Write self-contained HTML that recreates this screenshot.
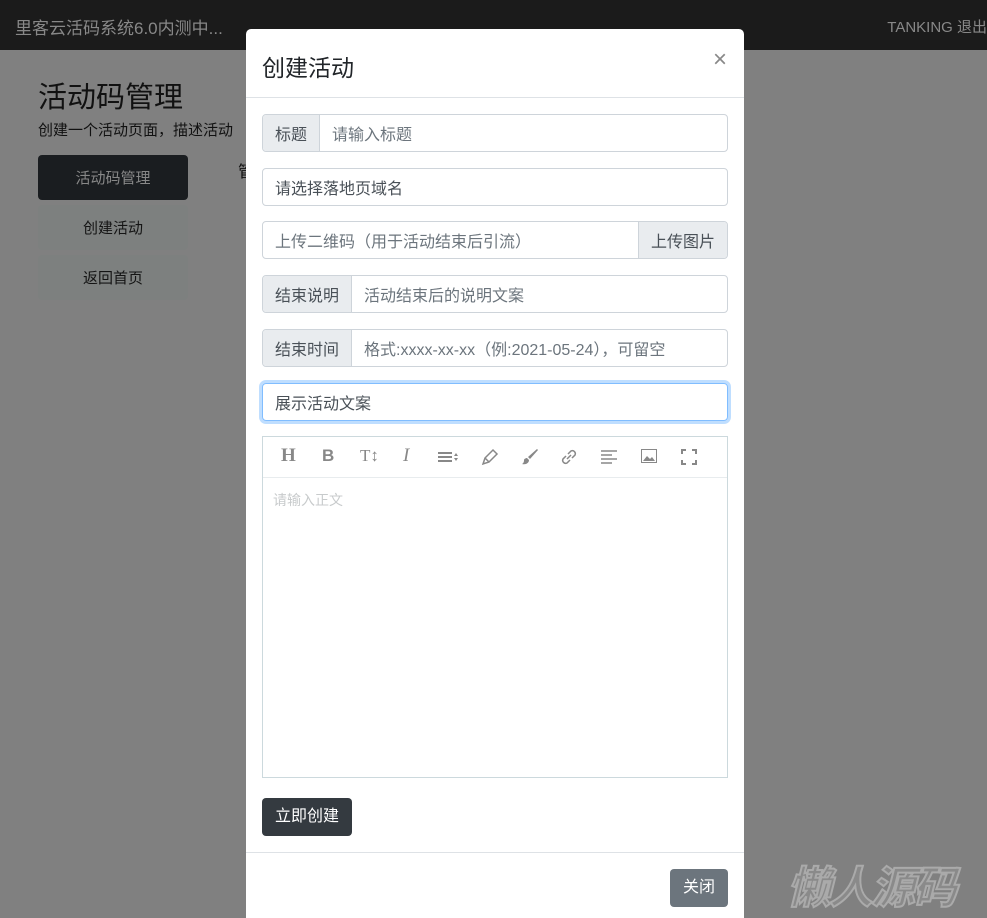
<!DOCTYPE html>
<html><head><meta charset="utf-8"><style>
*{box-sizing:border-box;margin:0;padding:0}
html{width:987px;height:918px;overflow:hidden}
body{width:987px;height:918px;overflow:hidden;background:#808080;font-family:"Liberation Sans","Noto Sans CJK SC",sans-serif;position:relative;color:#212529}
.nav{position:absolute;left:0;top:0;width:987px;height:50px;background:#1b1b1b;color:#8b8b8b;font-size:17px}
.nav .b{position:absolute;left:15px;top:14px;color:#888}
.nav .r{position:absolute;right:0;top:16px;font-size:15px;color:#888}
.h1{position:absolute;left:38px;top:74px;font-size:29px;color:#111}
.sub{position:absolute;left:38px;top:119px;font-size:15px;color:#111;white-space:nowrap}
.mi{position:absolute;left:38px;width:150px;height:45px;border-radius:4px;text-align:center;line-height:47px;font-size:15px;color:#141414;background:#7d807f}
.mi.a{background:#1a1d20;color:#888}
.x{position:absolute;left:238px;top:158px;font-size:16px;color:#111}
.modal{position:absolute;left:246px;top:29px;width:498px;height:889px;background:#fff;border-radius:5px 5px 0 0}
.mh{height:69px;border-bottom:1px solid #dee2e6;position:relative}
.mh .t{position:absolute;left:16px;top:20px;font-size:23px;color:#212529}
.mh .c{position:absolute;right:17px;top:17px;font-size:24px;color:#888}
.f{position:absolute;left:16px;width:466px;height:38px;border:1px solid #ced4da;border-radius:4px;font-size:16px;display:flex;align-items:center;overflow:hidden}
.f .p{background:#e9ecef;height:100%;padding:0 12px;display:flex;align-items:center;border-right:1px solid #ced4da;color:#495057}
.f .ph{padding-left:12px;color:#6c757d}
.f .s{margin-left:auto;background:#e9ecef;height:100%;padding:0 12px;display:flex;align-items:center;border-left:1px solid #ced4da;color:#495057}
.ed{position:absolute;left:16px;top:407px;width:466px;height:342px;border:1px solid #ccd9dd}
.tb{height:41px;border-bottom:1px solid #e8ecee;position:relative;color:#888;font-size:17px}
.tb span{position:absolute;top:9px}
.btn{position:absolute;border-radius:4px;color:#fff;font-size:16px;text-align:center}
</style></head><body>
<div class="nav"><span class="b">里客云活码系统6.0内测中...</span><span class="r">TANKING 退出</span></div>
<div class="h1">活动码管理</div>
<div class="sub">创建一个活动页面，描述活动</div>
<div class="mi a" style="top:155px">活动码管理</div>
<div class="mi" style="top:205px">创建活动</div>
<div class="mi" style="top:255px">返回首页</div>
<div class="x">管</div>
<div class="modal">
<div class="mh"><span class="t">创建活动</span><span class="c">×</span></div>
<div class="f" style="top:85px"><span class="p">标题</span><span class="ph">请输入标题</span></div>
<div class="f" style="top:139px"><span class="ph" style="color:#495057">请选择落地页域名</span></div>
<div class="f" style="top:192px"><span class="ph">上传二维码（用于活动结束后引流）</span><span class="s">上传图片</span></div>
<div class="f" style="top:246px"><span class="p">结束说明</span><span class="ph">活动结束后的说明文案</span></div>
<div class="f" style="top:300px"><span class="p">结束时间</span><span class="ph">格式:xxxx-xx-xx（例:2021-05-24），可留空</span></div>
<div class="f" style="top:354px;border-color:#80bdff;box-shadow:0 0 0 3px rgba(0,123,255,.25)"><span class="ph" style="color:#495057">展示活动文案</span></div>
<div class="ed"><div class="tb">
<span style="left:18px;font-family:'Liberation Serif',serif;font-weight:bold;font-size:19px;top:8px">H</span>
<span style="left:59px;font-weight:bold">B</span>
<span style="left:97px;font-family:'Liberation Serif',serif">T↕</span>
<span style="left:140px;font-family:'Liberation Serif',serif;font-style:italic;font-size:19px;top:8px">I</span>
<svg style="position:absolute;left:175px;top:14px" width="22" height="12"><rect x="0" y="1" width="14" height="2" fill="#888"/><rect x="0" y="5" width="14" height="2" fill="#888"/><rect x="0" y="9" width="14" height="2" fill="#888"/><path d="M16 5l2-3 2 3zM16 7l2 3 2-3z" fill="#888"/></svg>
<svg style="position:absolute;left:218px;top:11px" width="18" height="18"><path d="M2 16l2-6 8-8 4 4-8 8zM4 10l4 4" stroke="#888" stroke-width="1.5" fill="none"/></svg>
<svg style="position:absolute;left:258px;top:11px" width="18" height="18"><path d="M16 1l1 1-8 9-2-2z" fill="#888"/><path d="M6 10l2 2c0 3-3 5-7 4 2-1 2-3 2-4s2-2 3-2z" fill="#888"/></svg>
<svg style="position:absolute;left:297px;top:11px" width="18" height="18"><path d="M8 6l3-3a3 3 0 014 4l-3 3M10 12l-3 3a3 3 0 01-4-4l3-3M7 11l4-4" stroke="#888" stroke-width="1.5" fill="none"/></svg>
<svg style="position:absolute;left:338px;top:13px" width="18" height="14"><path d="M0 1h16M0 5h11M0 9h16M0 13h11" stroke="#888" stroke-width="1.6"/></svg>
<svg style="position:absolute;left:378px;top:12px" width="18" height="15"><rect x="0.5" y="0.5" width="15" height="13" stroke="#888" fill="none"/><path d="M2 12l4-5 3 3 2-2 3 4z" fill="#888"/></svg>
<svg style="position:absolute;left:418px;top:12px" width="16" height="16"><path d="M1 5V1h4M11 1h4v4M15 11v4h-4M5 15H1v-4" stroke="#888" stroke-width="2" fill="none"/></svg>
</div><div style="padding:12px 10px;color:#c8cbcc;font-size:14px">请输入正文</div></div>
<div class="btn" style="left:16px;top:769px;width:90px;height:38px;line-height:38px;background:#343a40">立即创建</div>
<div style="position:absolute;left:0;top:823px;width:498px;border-top:1px solid #dee2e6"></div>
<div class="btn" style="left:424px;top:840px;width:58px;height:38px;line-height:38px;background:#6c757d">关闭</div>
</div>
<div style="position:absolute;left:787px;top:852px;font-size:44px;font-weight:bold;font-style:italic;color:#8a8a8a;-webkit-text-stroke:2px #aaa;letter-spacing:-2px">懒人源码</div>
</body></html>
